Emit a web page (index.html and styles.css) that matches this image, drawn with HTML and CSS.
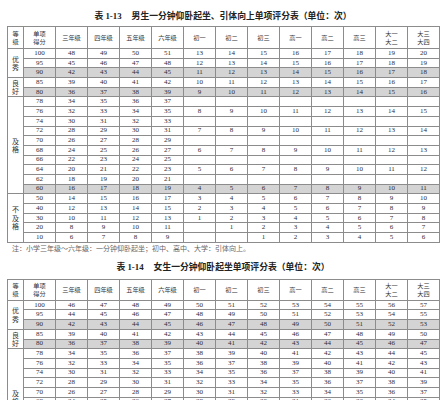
FILE: index.html
```html
<!DOCTYPE html>
<html lang="zh">
<head>
<meta charset="utf-8">
<link rel="stylesheet" href="styles.css">
</head>
<body>
<h2 class="title">表 1-13<span class="gap"></span>男生一分钟仰卧起坐、引体向上单项评分表（单位：次）</h2>
<table class="score">
<colgroup><col class="c-lvl"><col class="c-pt"><col span="12"></colgroup>
<thead>
<tr class="head"><th>等<br>级</th><th>单项<br>得分</th><th>三年级</th><th>四年级</th><th>五年级</th><th>六年级</th><th>初一</th><th>初二</th><th>初三</th><th>高一</th><th>高二</th><th>高三</th><th>大一<br>大二</th><th>大三<br>大四</th></tr>
</thead>
<tbody>
<tr><th class="lvl" rowspan="3">优<br>秀</th><td>100</td><td>48</td><td>49</td><td>50</td><td>51</td><td>13</td><td>14</td><td>15</td><td>16</td><td>17</td><td>18</td><td>19</td><td>20</td></tr>
<tr><td>95</td><td>45</td><td>46</td><td>47</td><td>48</td><td>12</td><td>13</td><td>14</td><td>15</td><td>16</td><td>17</td><td>18</td><td>19</td></tr>
<tr class="g"><td>90</td><td>42</td><td>43</td><td>44</td><td>45</td><td>11</td><td>12</td><td>13</td><td>14</td><td>15</td><td>16</td><td>17</td><td>18</td></tr>
<tr><th class="lvl" rowspan="2">良<br>好</th><td>85</td><td>39</td><td>40</td><td>41</td><td>42</td><td>10</td><td>11</td><td>12</td><td>13</td><td>14</td><td>15</td><td>16</td><td>17</td></tr>
<tr class="g"><td>80</td><td>36</td><td>37</td><td>38</td><td>39</td><td>9</td><td>10</td><td>11</td><td>12</td><td>13</td><td>14</td><td>15</td><td>16</td></tr>
<tr><th class="lvl" rowspan="10">及<br>格</th><td>78</td><td>34</td><td>35</td><td>36</td><td>37</td><td></td><td></td><td></td><td></td><td></td><td></td><td></td><td></td></tr>
<tr><td>76</td><td>32</td><td>33</td><td>34</td><td>35</td><td>8</td><td>9</td><td>10</td><td>11</td><td>12</td><td>13</td><td>14</td><td>15</td></tr>
<tr><td>74</td><td>30</td><td>31</td><td>32</td><td>33</td><td></td><td></td><td></td><td></td><td></td><td></td><td></td><td></td></tr>
<tr><td>72</td><td>28</td><td>29</td><td>30</td><td>31</td><td>7</td><td>8</td><td>9</td><td>10</td><td>11</td><td>12</td><td>13</td><td>14</td></tr>
<tr><td>70</td><td>26</td><td>27</td><td>28</td><td>29</td><td></td><td></td><td></td><td></td><td></td><td></td><td></td><td></td></tr>
<tr><td>68</td><td>24</td><td>25</td><td>26</td><td>27</td><td>6</td><td>7</td><td>8</td><td>9</td><td>10</td><td>11</td><td>12</td><td>13</td></tr>
<tr><td>66</td><td>22</td><td>23</td><td>24</td><td>25</td><td></td><td></td><td></td><td></td><td></td><td></td><td></td><td></td></tr>
<tr><td>64</td><td>20</td><td>21</td><td>22</td><td>23</td><td>5</td><td>6</td><td>7</td><td>8</td><td>9</td><td>10</td><td>11</td><td>12</td></tr>
<tr><td>62</td><td>18</td><td>19</td><td>20</td><td>21</td><td></td><td></td><td></td><td></td><td></td><td></td><td></td><td></td></tr>
<tr class="g"><td>60</td><td>16</td><td>17</td><td>18</td><td>19</td><td>4</td><td>5</td><td>6</td><td>7</td><td>8</td><td>9</td><td>10</td><td>11</td></tr>
<tr><th class="lvl" rowspan="5">不<br>及<br>格</th><td>50</td><td>14</td><td>15</td><td>16</td><td>17</td><td>3</td><td>4</td><td>5</td><td>6</td><td>7</td><td>8</td><td>9</td><td>10</td></tr>
<tr><td>40</td><td>12</td><td>13</td><td>14</td><td>15</td><td>2</td><td>3</td><td>4</td><td>5</td><td>6</td><td>7</td><td>8</td><td>9</td></tr>
<tr><td>30</td><td>10</td><td>11</td><td>12</td><td>13</td><td>1</td><td>2</td><td>3</td><td>4</td><td>5</td><td>6</td><td>7</td><td>8</td></tr>
<tr><td>20</td><td>8</td><td>9</td><td>10</td><td>11</td><td></td><td>1</td><td>2</td><td>3</td><td>4</td><td>5</td><td>6</td><td>7</td></tr>
<tr><td>10</td><td>6</td><td>7</td><td>8</td><td>9</td><td></td><td></td><td>1</td><td>2</td><td>3</td><td>4</td><td>5</td><td>6</td></tr>
</tbody>
</table>
<p class="note">注：小学三年级～六年级：一分钟仰卧起坐；初中、高中、大学：引体向上。</p>
<h2 class="title title-2">表 1-14<span class="gap"></span>女生一分钟仰卧起坐单项评分表（单位：次）</h2>
<table class="score score-2">
<colgroup><col class="c-lvl"><col class="c-pt"><col span="12"></colgroup>
<thead>
<tr class="head"><th>等<br>级</th><th>单项<br>得分</th><th>三年级</th><th>四年级</th><th>五年级</th><th>六年级</th><th>初一</th><th>初二</th><th>初三</th><th>高一</th><th>高二</th><th>高三</th><th>大一<br>大二</th><th>大三<br>大四</th></tr>
</thead>
<tbody>
<tr><th class="lvl" rowspan="3">优<br>秀</th><td>100</td><td>46</td><td>47</td><td>48</td><td>49</td><td>50</td><td>51</td><td>52</td><td>53</td><td>54</td><td>55</td><td>56</td><td>57</td></tr>
<tr><td>95</td><td>44</td><td>45</td><td>46</td><td>47</td><td>48</td><td>49</td><td>50</td><td>51</td><td>52</td><td>53</td><td>54</td><td>55</td></tr>
<tr class="g"><td>90</td><td>42</td><td>43</td><td>44</td><td>45</td><td>46</td><td>47</td><td>48</td><td>49</td><td>50</td><td>51</td><td>52</td><td>53</td></tr>
<tr><th class="lvl" rowspan="2">良<br>好</th><td>85</td><td>39</td><td>40</td><td>41</td><td>42</td><td>43</td><td>44</td><td>45</td><td>46</td><td>47</td><td>48</td><td>49</td><td>50</td></tr>
<tr class="g"><td>80</td><td>36</td><td>37</td><td>38</td><td>39</td><td>40</td><td>41</td><td>42</td><td>43</td><td>44</td><td>45</td><td>46</td><td>47</td></tr>
<tr><th class="lvl" rowspan="10">及<br>格</th><td>78</td><td>34</td><td>35</td><td>36</td><td>37</td><td>38</td><td>39</td><td>40</td><td>41</td><td>42</td><td>43</td><td>44</td><td>45</td></tr>
<tr><td>76</td><td>32</td><td>33</td><td>34</td><td>35</td><td>36</td><td>37</td><td>38</td><td>39</td><td>40</td><td>41</td><td>42</td><td>43</td></tr>
<tr><td>74</td><td>30</td><td>31</td><td>32</td><td>33</td><td>34</td><td>35</td><td>36</td><td>37</td><td>38</td><td>39</td><td>40</td><td>41</td></tr>
<tr><td>72</td><td>28</td><td>29</td><td>30</td><td>31</td><td>32</td><td>33</td><td>34</td><td>35</td><td>36</td><td>37</td><td>38</td><td>39</td></tr>
<tr><td>70</td><td>26</td><td>27</td><td>28</td><td>29</td><td>30</td><td>31</td><td>32</td><td>33</td><td>34</td><td>35</td><td>36</td><td>37</td></tr>
<tr><td>68</td><td>24</td><td>25</td><td>26</td><td>27</td><td>28</td><td>29</td><td>30</td><td>31</td><td>32</td><td>33</td><td>34</td><td>35</td></tr>
<tr><td>66</td><td>22</td><td>23</td><td>24</td><td>25</td><td>26</td><td>27</td><td>28</td><td>29</td><td>30</td><td>31</td><td>32</td><td>33</td></tr>
<tr><td>64</td><td>20</td><td>21</td><td>22</td><td>23</td><td>24</td><td>25</td><td>26</td><td>27</td><td>28</td><td>29</td><td>30</td><td>31</td></tr>
<tr><td>62</td><td>18</td><td>19</td><td>20</td><td>21</td><td>22</td><td>23</td><td>24</td><td>25</td><td>26</td><td>27</td><td>28</td><td>29</td></tr>
<tr class="g"><td>60</td><td>16</td><td>17</td><td>18</td><td>19</td><td>20</td><td>21</td><td>22</td><td>23</td><td>24</td><td>25</td><td>26</td><td>27</td></tr>
</tbody>
</table>
</body>
</html>
```
FILE: styles.css
```css
html, body {
  margin: 0;
  padding: 0;
  background: #ffffff;
}
body {
  width: 446px;
  overflow: hidden;
  font-family: "Liberation Serif", "Noto Sans CJK SC", serif;
  color: #2e2e2e;
}
.title {
  margin: 10px 0 0 0;
  height: 12px;
  line-height: 12px;
  font-size: 8.8px;
  font-weight: 700;
  text-align: center;
  color: #222;
  font-family: "Liberation Serif", "Noto Sans CJK SC", serif;
}
.gap {
  display: inline-block;
  width: 10px;
}
.title-2 {
  margin-top: 8px;
}
.score {
  margin: 4px 0 0 7px;
  width: 433px;
  border-collapse: collapse;
  table-layout: fixed;
  border: 1.5px solid #3a3a3a;
}
.score-2 {
  margin-top: 6px;
}
.c-lvl { width: 16px; }
.c-pt { width: 32px; }
.score th, .score td {
  border: 1px solid #8c8c8c;
  padding: 0;
  text-align: center;
  vertical-align: middle;
  overflow: hidden;
  white-space: nowrap;
}
.score td {
  font-size: 7px;
  line-height: 7px;
  height: 8.7px;
}
.score thead th {
  font-family: "Noto Sans CJK SC", sans-serif;
  font-weight: 400;
  font-size: 6.2px;
  line-height: 8px;
  height: 21px;
  color: #333;
}
.score-2 thead th {
  height: 20px;
}
.score .lvl {
  font-family: "Noto Sans CJK SC", sans-serif;
  font-weight: 400;
  font-size: 7px;
  line-height: 8.5px;
  color: #333;
}
.score tr.g td {
  background: #d4d4d4;
}
.note {
  margin: 1px 0 0 12px;
  height: 9px;
  line-height: 9px;
  font-family: "Noto Sans CJK SC", sans-serif;
  font-size: 7px;
  color: #666;
}
```
